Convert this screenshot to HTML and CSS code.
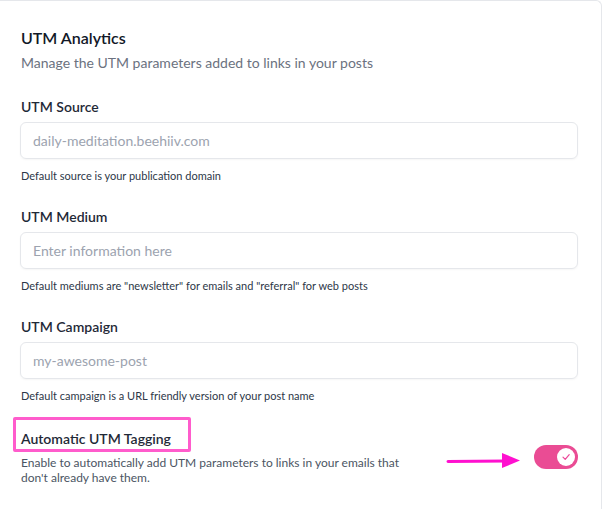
FILE: index.html
```html
<!DOCTYPE html>
<html lang="en">
<head>
<meta charset="utf-8">
<title>UTM Analytics</title>
<link rel="stylesheet" href="styles.css">
</head>
<body>
<div class="card">
  <h2 class="title">UTM Analytics</h2>
  <p class="subtitle">Manage the UTM parameters added to links in your posts</p>

  <div class="field">
    <label class="label">UTM Source</label>
    <div class="input"><span class="placeholder">daily-meditation.beehiiv.com</span></div>
    <p class="help">Default source is your publication domain</p>
  </div>

  <div class="field">
    <label class="label">UTM Medium</label>
    <div class="input"><span class="placeholder">Enter information here</span></div>
    <p class="help">Default mediums are "newsletter" for emails and "referral" for web posts</p>
  </div>

  <div class="field">
    <label class="label">UTM Campaign</label>
    <div class="input"><span class="placeholder">my-awesome-post</span></div>
    <p class="help">Default campaign is a URL friendly version of your post name</p>
  </div>

  <div class="toggle-row">
    <div class="toggle-text">
      <span class="label highlight">Automatic UTM Tagging</span>
      <p class="desc">Enable to automatically add UTM parameters to links in your emails that don't already have them.</p>
    </div>
    <div class="toggle-wrap">
      <svg class="arrow" width="76" height="18" viewBox="0 0 76 18">
        <line x1="2" y1="9.5" x2="60" y2="9" stroke="#ff10cf" stroke-width="3" stroke-linecap="round"/>
        <polygon points="56,1 74,8.5 56,16" fill="#ff10cf"/>
      </svg>
      <div class="toggle">
        <span class="knob">
          <svg width="10" height="10" viewBox="0 0 10 10"><path d="M2 5.2 L4.2 7.4 L8.2 2.6" fill="none" stroke="#ec4899" stroke-width="1.2" stroke-linecap="round" stroke-linejoin="round"/></svg>
        </span>
      </div>
    </div>
  </div>
</div>
</body>
</html>
```
FILE: styles.css
```css
* { box-sizing: border-box; }
html, body { margin: 0; padding: 0; background: #fff; }
body { font-family: Lato, "Liberation Sans", sans-serif; color: #111827; }

.card {
  width: 602px;
  height: 509px;
  border-top: 1px solid #e5e7eb;
  border-right: 1px solid #e5e7eb;
  border-top-right-radius: 6px;
  padding: 25px 23px 0 20px;
  display: flex;
  flex-direction: column;
}

.title {
  margin: 0 0 0 1px;
  font-size: 16px;
  line-height: 24px;
  font-weight: 600;
  color: #111827;
}
.subtitle {
  margin: 3px 0 0 1px;
  font-size: 14px;
  line-height: 20px;
  color: #6b7280;
}

.field { display: flex; flex-direction: column; margin-top: 24px; }
.field + .field { margin-top: 23px; }

.label {
  margin-left: 1px;
  font-size: 14px;
  line-height: 20px;
  font-weight: 600;
  color: #1f2937;
}
.input {
  margin-top: 5px;
  height: 37px;
  border: 1px solid #e5e7eb;
  border-radius: 6px;
  box-shadow: 0 1px 2px rgba(0,0,0,0.04);
  display: flex;
  align-items: center;
  padding: 0 12px;
}
.placeholder { font-size: 14px; color: #9ca3af; }
.help {
  margin: 9px 0 0 1px;
  font-size: 11px;
  line-height: 16px;
  color: #2d3748;
}

.toggle-row {
  margin-top: 25px;
  display: flex;
  align-items: center;
  justify-content: space-between;
}
.toggle-text { display: flex; flex-direction: column; align-items: flex-start; }
.highlight { position: relative; display: inline-block; }
.highlight::after {
  content: "";
  position: absolute;
  top: -12px; left: -8px; right: -20px; bottom: -3px;
  border: 3px solid #ff5ccc;
  border-radius: 2px;
}
.desc {
  margin: 6px 0 0 1px;
  width: 380px;
  font-size: 12px;
  line-height: 15px;
  color: #4b5563;
}

.toggle-wrap { position: relative; display: flex; align-items: center; }
.arrow { position: absolute; left: -88px; top: 7px; }
.toggle {
  width: 44px; height: 24px;
  border-radius: 12px;
  background: #ea4c94;
  display: flex; align-items: center; justify-content: flex-end;
  padding: 0 3px;
}
.knob {
  width: 18px; height: 18px; border-radius: 50%;
  background: #fff;
  display: flex; align-items: center; justify-content: center;
}
```
